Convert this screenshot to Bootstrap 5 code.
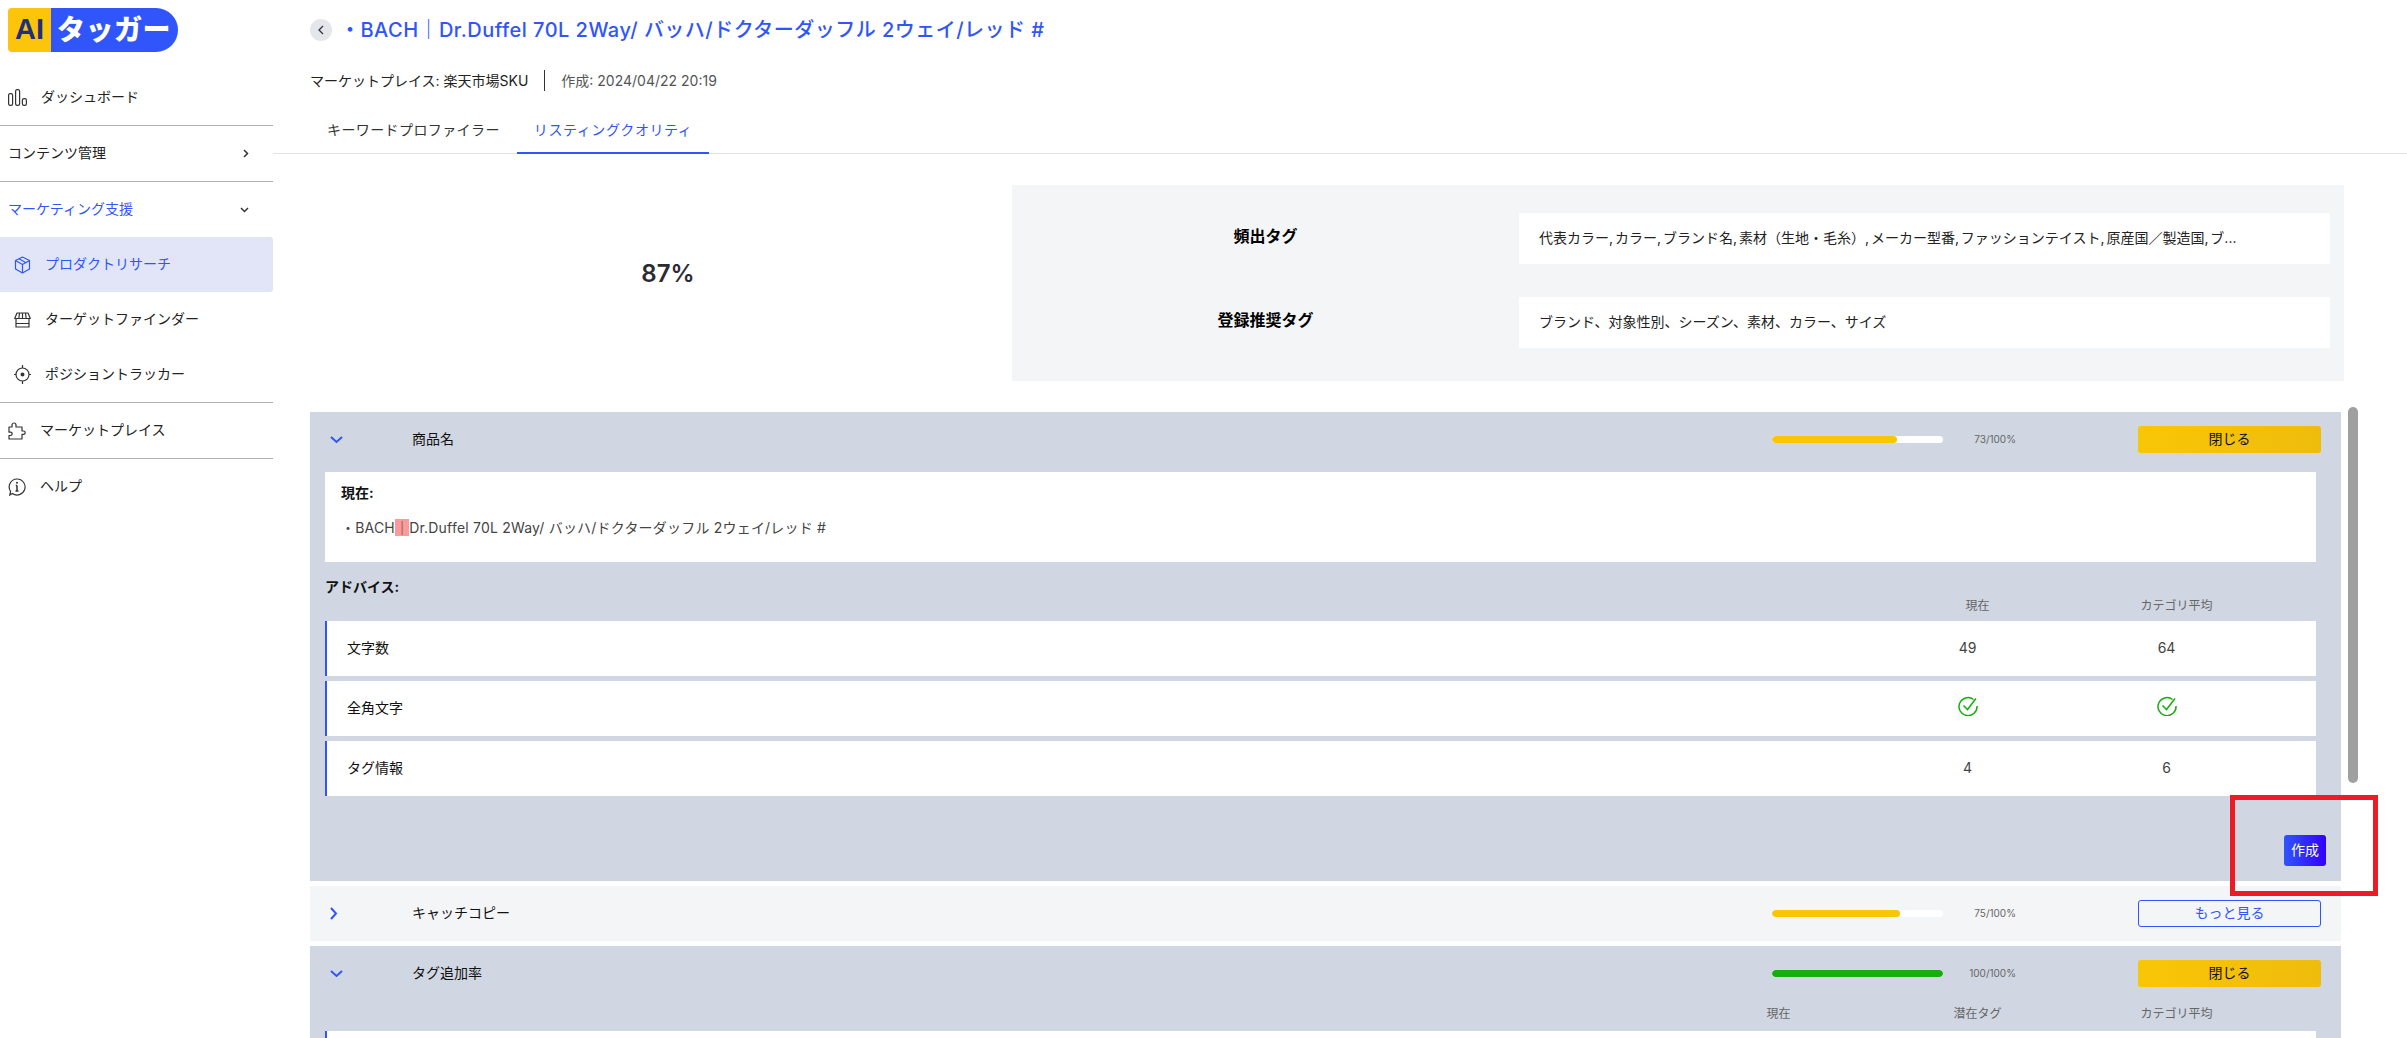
<!DOCTYPE html>
<html lang="ja">
<head>
  <meta charset="UTF-8">
  <title>AIタッガー</title>
  <meta name="viewport" content="width=device-width, initial-scale=1">
  <link href="https://cdn.jsdelivr.net/npm/bootstrap@5.3.0/dist/css/bootstrap.min.css" rel="stylesheet">
  <style>
    :root { --brand: #2f55fb; --slate: #d0d6e2; --pale: #f4f5f7; }
    html, body { height: 1038px; overflow: hidden; }
    body { font-family: Inter, "Noto Sans CJK JP", sans-serif; font-size: 14px; color: #222; background: #fff; }

    /* sidebar */
    .side { flex: 0 0 273px; width: 273px; }
    .logo-box { margin: 8px 0 18px 8px; width: 170px; height: 44px; border-radius: 4px 22px 22px 4px; overflow: hidden; font-weight: 900; }
    .logo-ai { width: 43px; background: #fcc40a; color: #1f2f80; font-size: 29px; font-family: "Liberation Sans", sans-serif; }
    .logo-name { background: var(--brand); color: #fff; font-size: 28px; letter-spacing: .5px; padding-left: 6px; }
    .side-row { height: 55px; padding: 0 8px; color: #222; text-decoration: none; }
    .side-row svg { flex: none; }
    .side-row span { padding-bottom: 2px; }
    .side-label { margin-left: 14px; }
    .side-sep { margin: 0; height: 1px; background: #b0b0b0; opacity: 1; border: 0; }
    .side-row.sub { padding-left: 14px; }
    .side-row.current { background: #e1e5f7; color: var(--brand); border-radius: 0 3px 3px 0; }
    .side-open { color: var(--brand); }

    /* page head */
    .pane { min-width: 0; }
    .head-wrap { padding: 19px 0 0 37px; }
    .back-dot { width: 22px; height: 22px; padding: 0; border: 0; background: #e4e6ec; border-radius: 50%; margin-right: 8px; }
    .page-title { font-size: 20px; line-height: 22px; font-weight: 500; letter-spacing: .47px; color: var(--brand); margin: 0; white-space: nowrap; }
    .meta-line { height: 21px; margin-top: 29px; font-size: 14px; line-height: 21px; }
    .meta-bar { width: 1px; height: 21px; background: #333; margin: 0 16px; }
    .meta-date { color: #555; }
    .tab-line { margin-top: 16px; padding-left: 37px; border-bottom: 1px solid #e2e2e2; }
    .tab-line .nav-link { height: 46px; padding: 0 17px; line-height: 46px; color: #333; font-size: 14px; letter-spacing: .4px; white-space: nowrap; }
    .tab-line .nav-link.on { color: var(--brand); border-bottom: 2px solid var(--brand); margin-bottom: -1px; height: 47px; width: 192px; letter-spacing: .6px; }

    /* summary */
    .summary { margin: 31px 0 31px 37px; width: 2034px; }
    .score-val { flex: 0 0 702px; font-size: 24px; font-weight: 600; padding: 0 0 18px 14px; color: #2b2b33; }
    .tag-panel { flex: 1; background: var(--pale); padding: 28px 14px 33px 0; }
    .tag-line { height: 51px; }
    .tag-line + .tag-line { margin-top: 33px; }
    .tag-name { flex: 0 0 507px; text-align: center; font-size: 16px; font-weight: 700; color: #000; padding-bottom: 6px; }
    .tag-val { flex: 1; height: 51px; background: #fff; padding: 0 0 2px 20px; color: #222; font-size: 14px; white-space: nowrap; }
    .tag-tight { word-spacing: -2px; }

    /* rows */
    .rank-list { margin-left: 37px; width: 2031px; }
    .rank-item { margin-bottom: 5px; background: var(--slate); }
    .rank-item.shut { background: var(--pale); }
    .rank-top { height: 55px; padding-right: 20px; }
    .rank-arrow { flex: 0 0 102px; padding-left: 20px; color: var(--brand); }
    .rank-name { flex: 1; color: #111; padding-bottom: 2px; }
    .rank-bar { width: 171px; height: 7px; background: #fff; border-radius: 4px; }
    .rank-bar .progress-bar { border-radius: 4px; }
    .fill-amber { background: #f9c606; }
    .fill-green { background: #16ad0e; }
    .rank-pct { width: 73px; text-align: right; font-size: 10px; color: #666; margin-right: 122px; }
    .btn-shut, .btn-more { width: 183px; height: 27px; padding: 0 0 2px; font-size: 14px; line-height: 23px; border-radius: 3px; }
    .btn-shut { background: linear-gradient(90deg, #f9c606, #eebc0c); border: 0; color: #111; }
    .btn-more { background: transparent; border: 1px solid var(--brand); color: var(--brand); }
    .rank-body { padding: 5px 25px 0 15px; }
    .now-box { height: 90px; background: #fff; padding: 10px 16px; }
    .now-label { font-weight: 700; color: #111; line-height: 21px; }
    .now-text { margin-top: 14px; line-height: 21px; color: #444; letter-spacing: .2px; }
    .now-text mark { background: #fb9a9a; color: #444; padding: 0; }
    .advice-title { margin-top: 14px; font-weight: 700; color: #111; line-height: 21px; }
    .col-heads { height: 18px; padding-right: 40px; font-size: 12px; line-height: 18px; color: #666; margin-bottom: 6px; }
    .col-heads div, .row-val { width: 199px; text-align: center; }
    .score-row { height: 55px; margin-bottom: 5px; background: #fff; border-left: 2px solid var(--brand); padding: 0 50px 0 20px; color: #111; }
    .row-name { flex: 1; padding-bottom: 2px; }
    .row-val { color: #444; padding-bottom: 3px; }
    .row-val svg { display: block; margin: 0 auto 2px; }
    .rank-foot { height: 85px; padding: 39px 15px 0 0; }
    .btn-make { width: 42px; height: 31px; padding: 0 0 2px; font-size: 14px; color: #fff; border: 0; border-radius: 3px; background: linear-gradient(90deg, #2f55fb, #3200ff); }

    /* overlays */
    .fake-thumb { position: absolute; left: 2075px; top: 407px; width: 10px; height: 376px; background: #a0a0a0; border-radius: 5px; }
    .note-box { position: absolute; left: 1957px; top: 795px; width: 148px; height: 101px; border: 5px solid #ed1c24; }
  </style>
</head>
<body>

<div class="d-flex">
  <!-- Sidebar -->
  <aside class="side">
    <div class="logo-box d-flex">
      <div class="logo-ai d-flex align-items-center justify-content-center">AI</div>
      <div class="logo-name flex-grow-1 d-flex align-items-center">タッガー</div>
    </div>

    <a class="side-row d-flex align-items-center" href="#">
      <svg width="19" height="17" viewBox="0 0 19 17" fill="none" stroke="#333" stroke-width="1.2"><rect x=".6" y="4.6" width="4" height="11.8" rx="1.6"/><rect x="7.6" y=".6" width="4" height="15.8" rx="1.6"/><rect x="14.4" y="9.6" width="4" height="6.8" rx="1.6"/></svg>
      <span class="side-label">ダッシュボード</span>
    </a>
    <hr class="side-sep">
    <a class="side-row d-flex align-items-center justify-content-between" href="#">
      <span>コンテンツ管理</span>
      <svg class="me-3" width="6" height="9" viewBox="0 0 6 9" fill="none" stroke="#333" stroke-width="1.5"><path d="M1 1l3.5 3.5L1 8"/></svg>
    </a>
    <hr class="side-sep">
    <a class="side-row side-open d-flex align-items-center justify-content-between" href="#">
      <span>マーケティング支援</span>
      <svg class="me-3" width="9" height="6" viewBox="0 0 9 6" fill="none" stroke="#333" stroke-width="1.5"><path d="M1 1l3.5 3.5L8 1"/></svg>
    </a>
    <a class="side-row sub current d-flex align-items-center" href="#">
      <svg width="17" height="18" viewBox="0 0 17 18" fill="none" stroke="#2f55fb" stroke-width="1.2" stroke-linejoin="round"><path d="M8.5 1l7 3.5v8.5l-7 4-7-4V4.500z"/><path d="M1.500 4.500l7 4 7-4M8.500 8.500V17M5 2.800l7 4"/></svg>
      <span class="side-label">プロダクトリサーチ</span>
    </a>
    <a class="side-row sub d-flex align-items-center" href="#">
      <svg width="17" height="16" viewBox="0 0 17 16" fill="none" stroke="#333" stroke-width="1.2" stroke-linejoin="round"><path d="M3 1h11l2.300 5.500H.7z"/><path d="M5.500 1L4.800 6.500M8.500 1v5.500M11.500 1l.7 5.500M2 6.500V15h13V6.500M2 11.500h13"/></svg>
      <span class="side-label">ターゲットファインダー</span>
    </a>
    <a class="side-row sub d-flex align-items-center" href="#">
      <svg width="17" height="19" viewBox="0 0 17 19" fill="none" stroke="#333" stroke-width="1.2"><circle cx="8.500" cy="9.500" r="6.500"/><circle cx="8.500" cy="9.500" r="1.400" fill="#333"/><path d="M8.500 0v3M8.500 16v3M0 9.500h2M15 9.500h2"/></svg>
      <span class="side-label">ポジショントラッカー</span>
    </a>
    <hr class="side-sep">
    <a class="side-row d-flex align-items-center" href="#">
      <svg width="18" height="18" viewBox="0 0 18 18" fill="none" stroke="#333" stroke-width="1.2" stroke-linejoin="round"><path d="M1 5h3V3a2 2 0 0 1 4 0v2h6v4h1.500a1.700 1.700 0 0 1 0 3.400H14V17H1v-3.500h1.500a1.700 1.700 0 0 0 0-3.400H1z"/></svg>
      <span class="side-label">マーケットプレイス</span>
    </a>
    <hr class="side-sep">
    <a class="side-row d-flex align-items-center" href="#">
      <svg width="18" height="18" viewBox="0 0 18 18" fill="none" stroke="#333" stroke-width="1.2"><path d="M9 1a8 8 0 1 1-4.600 14.500L1.800 17l.8-3.500A8 8 0 0 1 9 1z"/><path d="M9 7.500V13M7.500 13h3M7.800 7.500H9" stroke-width="1.500"/><circle cx="9" cy="4.800" r="1" fill="#333" stroke="none"/></svg>
      <span class="side-label">ヘルプ</span>
    </a>
  </aside>

  <!-- Main -->
  <main class="pane flex-grow-1 position-relative">
    <div class="head-wrap">
      <div class="d-flex align-items-center">
        <button class="back-dot d-flex align-items-center justify-content-center" type="button" aria-label="戻る">
          <svg width="6" height="10" viewBox="0 0 6 10" fill="none" stroke="#333" stroke-width="1.300"><path d="M5 1L1 5l4 4"/></svg>
        </button>
        <h1 class="page-title">・BACH｜Dr.Duffel 70L 2Way/ バッハ/ドクターダッフル 2ウェイ/レッド #</h1>
      </div>
      <div class="meta-line d-flex align-items-center">
        <span>マーケットプレイス: 楽天市場SKU</span>
        <span class="meta-bar"></span>
        <span class="meta-date">作成: 2024/04/22 20:19</span>
      </div>
    </div>

    <ul class="nav tab-line">
      <li class="nav-item"><a class="nav-link" href="#">キーワードプロファイラー</a></li>
      <li class="nav-item"><a class="nav-link on" href="#">リスティングクオリティ</a></li>
    </ul>

    <!-- Score and tags -->
    <section class="summary d-flex">
      <div class="score-val d-flex align-items-center justify-content-center">87%</div>
      <div class="tag-panel">
        <div class="tag-line d-flex align-items-center">
          <div class="tag-name">頻出タグ</div>
          <div class="tag-val tag-tight d-flex align-items-center">代表カラー, カラー, ブランド名, 素材（生地・毛糸）, メーカー型番, ファッションテイスト, 原産国／製造国, ブ...</div>
        </div>
        <div class="tag-line d-flex align-items-center">
          <div class="tag-name">登録推奨タグ</div>
          <div class="tag-val d-flex align-items-center">ブランド、対象性別、シーズン、素材、カラー、サイズ</div>
        </div>
      </div>
    </section>

    <section class="rank-list">
      <!-- 商品名 -->
      <div class="rank-item">
        <div class="rank-top d-flex align-items-center">
          <div class="rank-arrow"><svg class="d-block" width="13" height="8" viewBox="0 0 13 8" fill="none" stroke="#2f55fb" stroke-width="2"><path d="M1 1l5.500 5L12 1"/></svg></div>
          <div class="rank-name">商品名</div>
          <div class="progress rank-bar"><div class="progress-bar fill-amber" style="width: 73%"></div></div>
          <div class="rank-pct">73/100%</div>
          <button class="btn btn-shut" type="button">閉じる</button>
        </div>
        <div class="rank-body">
          <div class="now-box">
            <div class="now-label">現在:</div>
            <div class="now-text">・BACH<mark>｜</mark>Dr.Duffel 70L 2Way/ バッハ/ドクターダッフル 2ウェイ/レッド #</div>
          </div>
          <div class="advice-title">アドバイス:</div>
          <div class="col-heads d-flex justify-content-end">
            <div>現在</div>
            <div>カテゴリ平均</div>
          </div>
          <div class="score-row d-flex align-items-center">
            <div class="row-name">文字数</div>
            <div class="row-val">49</div>
            <div class="row-val">64</div>
          </div>
          <div class="score-row d-flex align-items-center">
            <div class="row-name">全角文字</div>
            <div class="row-val"><svg width="20" height="20" viewBox="0 0 20 20" fill="none" stroke="#16ad0e" stroke-width="1.500"><path d="M15.500 3.500A9 9 0 1 0 19 10"/><path d="M5.500 9.500l4 4L18 2.500"/></svg></div>
            <div class="row-val"><svg width="20" height="20" viewBox="0 0 20 20" fill="none" stroke="#16ad0e" stroke-width="1.500"><path d="M15.500 3.500A9 9 0 1 0 19 10"/><path d="M5.500 9.500l4 4L18 2.500"/></svg></div>
          </div>
          <div class="score-row d-flex align-items-center mb-0">
            <div class="row-name">タグ情報</div>
            <div class="row-val">4</div>
            <div class="row-val">6</div>
          </div>
        </div>
        <div class="rank-foot d-flex justify-content-end">
          <button class="btn btn-make" type="button">作成</button>
        </div>
      </div>

      <!-- キャッチコピー -->
      <div class="rank-item shut">
        <div class="rank-top d-flex align-items-center">
          <div class="rank-arrow"><svg class="d-block" width="8" height="13" viewBox="0 0 8 13" fill="none" stroke="#2f55fb" stroke-width="2"><path d="M1 1l5 5.500L1 12"/></svg></div>
          <div class="rank-name">キャッチコピー</div>
          <div class="progress rank-bar"><div class="progress-bar fill-amber" style="width: 75%"></div></div>
          <div class="rank-pct">75/100%</div>
          <button class="btn btn-more" type="button">もっと見る</button>
        </div>
      </div>

      <!-- タグ追加率 -->
      <div class="rank-item">
        <div class="rank-top d-flex align-items-center">
          <div class="rank-arrow"><svg class="d-block" width="13" height="8" viewBox="0 0 13 8" fill="none" stroke="#2f55fb" stroke-width="2"><path d="M1 1l5.500 5L12 1"/></svg></div>
          <div class="rank-name">タグ追加率</div>
          <div class="progress rank-bar"><div class="progress-bar fill-green" style="width: 100%"></div></div>
          <div class="rank-pct">100/100%</div>
          <button class="btn btn-shut" type="button">閉じる</button>
        </div>
        <div class="rank-body pt-0">
          <div class="col-heads d-flex justify-content-end mt-1 mb-2">
            <div>現在</div>
            <div>潜在タグ</div>
            <div>カテゴリ平均</div>
          </div>
          <div class="score-row"></div>
        </div>
      </div>
    </section>

    <div class="fake-thumb"></div>
    <div class="note-box"></div>
  </main>
</div>

<script src="https://cdn.jsdelivr.net/npm/bootstrap@5.3.0/dist/js/bootstrap.bundle.min.js"></script>
</body>
</html>
